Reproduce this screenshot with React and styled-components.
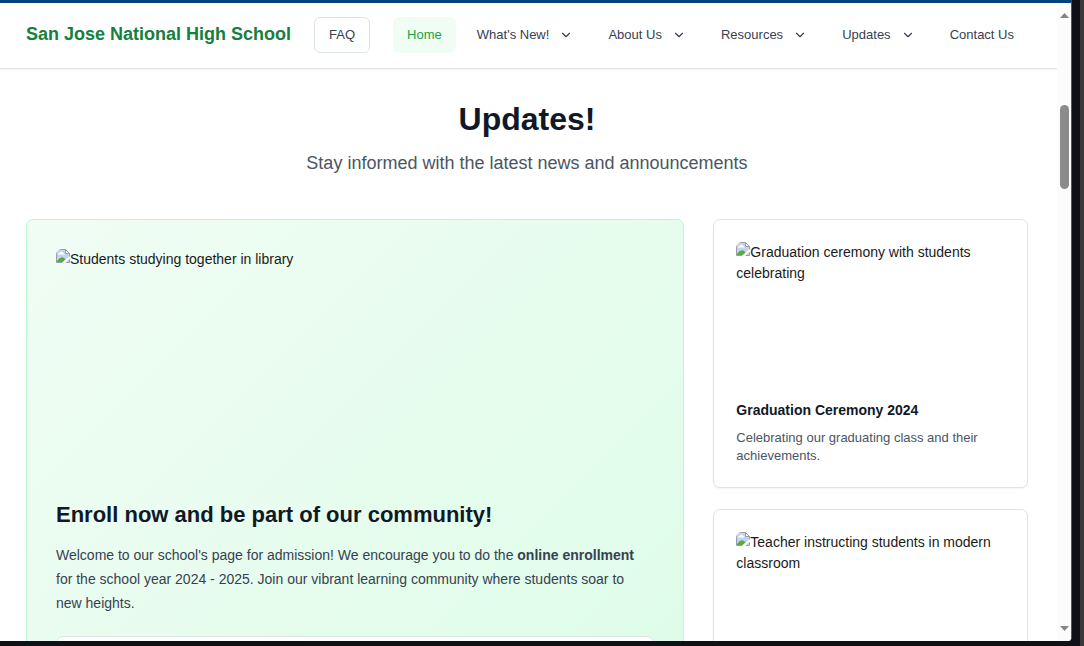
import React from "react";
import styled, { createGlobalStyle } from "styled-components";

const GlobalStyle = createGlobalStyle`
  *, *::before, *::after { box-sizing: border-box; }
  body {
    margin: 0;
    background: #0f1018;
    color: #1a1a1a;
    font-family: "Liberation Sans", Arial, sans-serif;
    font-size: 14px;
    line-height: 21px;
  }
  h1, h2, h3, p, ul { margin: 0; padding: 0; }
`;

const Desktop = styled.div`
  height: 100vh;
  padding: 0 8px 5px 0;
  background: #0f1018;
  border-right: 4px solid #3a3938;
`;

const BrowserWindow = styled.div`
  display: flex;
  height: 100%;
  overflow: hidden;
  background: #fff;
  border-top: 3px solid #04427f;
  border-right: 1px solid #55565a;
  border-bottom-right-radius: 4px;
`;

const Page = styled.div`
  flex: 1;
  min-width: 0;
  overflow: hidden;
`;

const ScrollTrack = styled.div`
  display: flex;
  flex-direction: column;
  align-items: center;
  flex: none;
  width: 14px;
  padding: 10px 0;
  background: #fcfcfc;
`;

const ScrollThumb = styled.div`
  width: 9px;
  height: 84px;
  margin-top: 87px;
  margin-bottom: auto;
  border-radius: 5px;
  background: #8b8b8b;
`;

const Header = styled.header`
  display: flex;
  align-items: center;
  gap: 23px;
  height: 66px;
  padding: 0 29px 2px 26px;
  border-bottom: 1px solid #e2e4ea;
  box-shadow: 0 1px 2px rgba(0, 0, 0, 0.05);
`;

const Brand = styled.a`
  color: #15803d;
  font-size: 18px;
  font-weight: 700;
  white-space: nowrap;
  text-decoration: none;
`;

const FaqButton = styled.button`
  height: 36px;
  padding: 0 14px;
  border: 1px solid #dde5df;
  border-radius: 6px;
  background: #fff;
  color: #374151;
  font: inherit;
  font-size: 13px;
`;

const Nav = styled.nav`
  flex: 1;
`;

const NavList = styled.ul`
  display: flex;
  justify-content: space-between;
  list-style: none;
`;

const NavLink = styled.a`
  display: flex;
  align-items: center;
  gap: 10px;
  height: 36px;
  padding: 0 14px;
  border-radius: 6px;
  background: ${(p) => (p.$active ? "#f0fdf4" : "transparent")};
  color: ${(p) => (p.$active ? "#16a34a" : "#374151")};
  font-size: 13px;
  white-space: nowrap;
  text-decoration: none;
`;

const Main = styled.main`
  padding: 32px 29px 0 26px;
`;

const Intro = styled.div`
  margin-bottom: 43px;
  text-align: center;
`;

const PageTitle = styled.h1`
  margin-bottom: 14px;
  color: #111827;
  font-size: 32px;
  line-height: 36px;
`;

const Subtitle = styled.p`
  color: #4b5563;
  font-size: 18px;
  line-height: 25px;
`;

const Grid = styled.div`
  display: grid;
  grid-template-columns: repeat(3, minmax(0, 1fr));
  gap: 29px;
`;

const Feature = styled.article`
  grid-column: span 2;
  padding: 29px;
  border: 1px solid #bbf7d0;
  border-radius: 7px;
  background: linear-gradient(135deg, #f0fdf4, #dcfce7);
`;

const FeatureTitle = styled.h2`
  margin: 22px 0 14px;
  color: #111827;
  font-size: 22px;
  line-height: 28px;
`;

const FeatureText = styled.p`
  margin-bottom: 21px;
  padding-right: 8px;
  color: #374151;
  line-height: 24px;
`;

const Notice = styled.div`
  height: 160px;
  border: 1px solid #dde5df;
  border-radius: 7px;
  background: #fff;
`;

const Side = styled.div`
  display: flex;
  flex-direction: column;
  gap: 21px;
`;

const Card = styled.article`
  padding: 22px;
  border: 1px solid #dde5df;
  border-radius: 7px;
  background: #fff;
  box-shadow: 0 1px 2px rgba(0, 0, 0, 0.05);
`;

const CardTitle = styled.h3`
  margin: 14px 0 9px;
  color: #111827;
  font-size: 14px;
  line-height: 20px;
`;

const CardText = styled.p`
  color: #4b5563;
  font-size: 13px;
  line-height: 18px;
`;

const Picture = styled.div`
  height: ${(p) => p.$height}px;
  overflow: hidden;
  border-radius: 6px;

  svg { vertical-align: top; }
`;

function Chevron() {
  return (
    <svg width="14" height="14" viewBox="0 0 24 24" fill="none" stroke="currentColor" strokeWidth="2" strokeLinecap="round" strokeLinejoin="round" aria-hidden="true">
      <path d="m6 9 6 6 6-6" />
    </svg>
  );
}

function MissingPicture({ height, label }) {
  return (
    <Picture $height={height}>
      <svg width="14" height="14" viewBox="0 0 14 14" aria-hidden="true">
        <path d="M.5.5h9l4 4v9H.5z" fill="#c3d3f5" />
        <path d="M2 5.500q0-1.500 1.500-1.500Q4 2.500 5.500 2.500q1.500 0 1.800 1.500 1.200.2 1.200 1.500z" fill="#fff" />
        <path d="M1 13.500V12q3-4.500 6-3.500 1.500.3 2.500 2L6 13.500z" fill="#56ad3a" />
        <path d="M6 14 14 6.500v2.500L9 14z" fill="#fff" />
        <path d="M.5 13.500V.5h9l4 4v3M13.500 10.500v3h-3.500M.5 13.500H6" fill="none" stroke="#9a9da3" />
        <path d="M9.500.5v4h4z" fill="#fff" stroke="#9a9da3" />
      </svg>
      {label}
    </Picture>
  );
}

function ScrollArrow({ down }) {
  return (
    <svg width="9" height="5" viewBox="0 0 9 5" aria-hidden="true">
      <path d={down ? "M0 0h9L4.500 5z" : "M0 5h9L4.500 0z"} fill="#858585" />
    </svg>
  );
}

const links = [
  { label: "Home", active: true },
  { label: "What's New!", menu: true },
  { label: "About Us", menu: true },
  { label: "Resources", menu: true },
  { label: "Updates", menu: true },
  { label: "Contact Us" },
];

export default function App() {
  return (
    <Desktop>
      <GlobalStyle />
      <BrowserWindow>
        <Page>
          <Header>
            <Brand href="#home">San Jose National High School</Brand>
            <FaqButton type="button">FAQ</FaqButton>
            <Nav>
              <NavList>
                {links.map((link) => (
                  <li key={link.label}>
                    <NavLink href="#" $active={link.active}>
                      {link.label}
                      {link.menu && <Chevron />}
                    </NavLink>
                  </li>
                ))}
              </NavList>
            </Nav>
          </Header>
          <Main>
            <Intro>
              <PageTitle>Updates!</PageTitle>
              <Subtitle>Stay informed with the latest news and announcements</Subtitle>
            </Intro>
            <Grid>
              <Feature>
                <MissingPicture height={230} label="Students studying together in library" />
                <FeatureTitle>Enroll now and be part of our community!</FeatureTitle>
                <FeatureText>
                  Welcome to our school's page for admission! We encourage you to do the{" "}
                  <strong>online enrollment</strong> for the school year 2024 - 2025. Join our
                  vibrant learning community where students soar to new heights.
                </FeatureText>
                <Notice />
              </Feature>
              <Side>
                <Card>
                  <MissingPicture height={144} label="Graduation ceremony with students celebrating" />
                  <CardTitle>Graduation Ceremony 2024</CardTitle>
                  <CardText>Celebrating our graduating class and their achievements.</CardText>
                </Card>
                <Card>
                  <MissingPicture height={144} label="Teacher instructing students in modern classroom" />
                </Card>
              </Side>
            </Grid>
          </Main>
        </Page>
        <ScrollTrack>
          <ScrollArrow />
          <ScrollThumb />
          <ScrollArrow down />
        </ScrollTrack>
      </BrowserWindow>
    </Desktop>
  );
}
